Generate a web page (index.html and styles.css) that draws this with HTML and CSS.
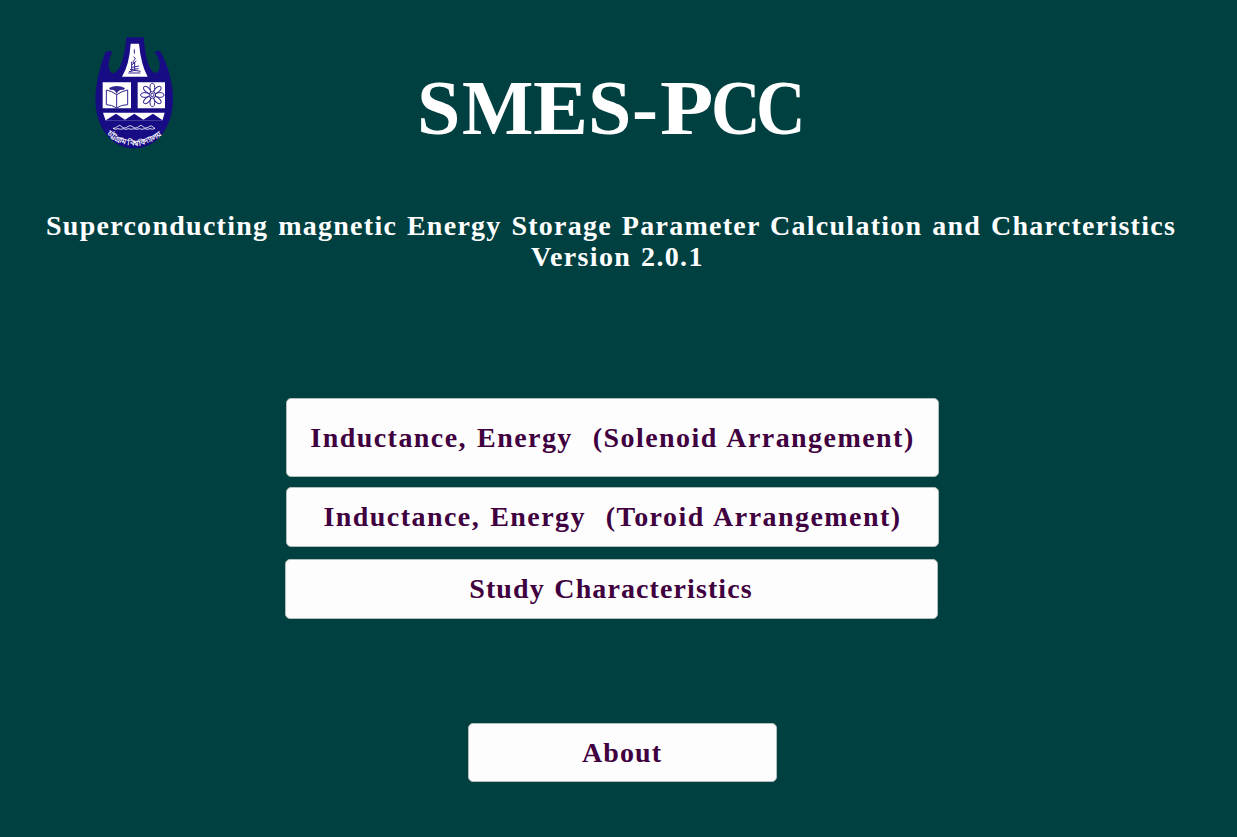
FILE: index.html
```html
<!DOCTYPE html>
<html lang="en">
<head>
<meta charset="utf-8">
<title>SMES-PCC</title>
<link rel="stylesheet" href="styles.css">
</head>
<body>
<header class="header">
  <svg class="logo" viewBox="0 0 300 390" role="img" aria-label="University crest">
    <path class="navy" d="M127 28H179C183 65 187 112 207 133C229 143 237 104 212 73Q223 65 230 72C252 112 268 168 267 215C266 300 217 361 151 361C85 361 35 301 34 215C34 165 50 108 65 71Q78 67 85 72C68 105 72 135 89 136C113 128 123 75 127 28Z"/>
    <path class="paper" d="M140 47H165Q171 110 191 146H114Q136 110 140 47ZM56 163H141V241H56ZM161 163H243V241H161ZM57 254H242L235 278H65Z"/>
    <path class="ink" d="M151 64v13M149 86q9 5 1 12q-8 5 3 9M143 111l14-12m-14 19l22-4m-27 11l26-3m-29 9q17-7 35-1m-37 5h36m-26-34v29m9-26v25M67 186Q83 189 98 200Q114 189 131 186V230Q111 230 98 240Q83 230 67 230ZM98 200V239"/>
    <path class="pages" d="M75 180Q98 168 123 180L119 186Q104 183 98 198Q93 183 79 186Z"/>
    <g class="ink" transform="translate(205 201)">
      <circle r="5"/>
      <ellipse cx="0" cy="-22" rx="7" ry="13"/><ellipse cx="0" cy="-22" rx="7" ry="13" transform="rotate(45)"/><ellipse cx="0" cy="-22" rx="7" ry="13" transform="rotate(90)"/><ellipse cx="0" cy="-22" rx="7" ry="13" transform="rotate(135)"/><ellipse cx="0" cy="-22" rx="7" ry="13" transform="rotate(180)"/><ellipse cx="0" cy="-22" rx="7" ry="13" transform="rotate(225)"/><ellipse cx="0" cy="-22" rx="7" ry="13" transform="rotate(270)"/><ellipse cx="0" cy="-22" rx="7" ry="13" transform="rotate(315)"/>
    </g>
    <path class="navy" d="M63 278L96 257L123 275L151 257L178 275L207 257L238 278Z"/>
    <path class="wave" d="M87 301Q95 301 101 295T112 295T122 300T133 295T144 295T154 300T165 295T176 295T186 300T197 295T208 298L213 301Q206 306 198 302Q190 306 182 302Q174 306 166 302Q158 306 150 302Q142 306 134 302Q126 306 118 302Q110 306 102 302Q94 306 87 301"/>
    <path id="arc" fill="none" d="M68 319Q150 387 236 319"/>
    <text class="motto"><textPath href="#arc" textLength="182" lengthAdjust="spacingAndGlyphs">চট্টগ্রাম বিশ্ববিদ্যালয়</textPath></text>
  </svg>
  <h1 class="title"><span class="s1">S</span><span class="m">M</span><span class="e">E</span><span class="s2">S</span><span class="dash">-</span><span class="p">P</span><span class="c">C</span><span class="c">C</span></h1>
</header>
<section class="subtitle">
  <p class="full-name">Superconducting magnetic Energy Storage Parameter Calculation and Charcteristics</p>
  <p class="version">Version 2.0.1</p>
</section>
<main class="menu">
  <button class="button solenoid">Inductance, Energy&nbsp; (Solenoid Arrangement)</button>
  <button class="button toroid">Inductance, Energy&nbsp; (Toroid Arrangement)</button>
  <button class="button study">Study Characteristics</button>
  <button class="button about">About</button>
</main>
</body>
</html>
```
FILE: styles.css
```css
* { box-sizing: border-box; }
body {
  margin: 0;
  height: 837px;
  overflow: hidden;
  background: #004040;
  color: #fff;
  font-family: "Liberation Serif", serif;
  font-weight: bold;
}
.header { display: flex; height: 172px; padding: 28px 0 0 84px; }
.logo { width: 100px; height: 130px; flex: none; }
.navy { fill: #180c84; }
.paper { fill: #fff; }
.pages { fill: #30248f; }
.ink { fill: none; stroke: #30248f; stroke-width: 3; }
.wave { fill: none; stroke: #fff; stroke-width: 2.5; }
.motto { fill: #fff; font: bold 22px "Noto Sans", sans-serif; }
.title {
  display: flex;
  margin: 35px 0 0 233px;
  font-size: 78px;
  line-height: 90px;
  white-space: nowrap;
}
.title span { display: block; transform-origin: left; }
.s1 { width: 45px; }
.m { width: 71px; transform: scaleX(.97); }
.e { width: 55px; transform: scaleX(1.06); }
.s2 { width: 44px; }
.dash { width: 28px; }
.p { width: 51px; transform: scaleX(1.12); }
.c { width: 45px; transform: scaleX(.88); }
.subtitle {
  height: 226px;
  padding-top: 38px;
  font-size: 28px;
  line-height: 31px;
  letter-spacing: 1.27px;
  word-spacing: 1.5px;
  white-space: nowrap;
}
.subtitle p { margin: 0; }
.full-name { padding-left: 46px; }
.version { padding-left: 531px; letter-spacing: 1.35px; }
.menu { display: flex; flex-direction: column; align-items: flex-start; padding-left: 286px; }
.button {
  width: 653px;
  height: 60px;
  padding: 0;
  border: 1px solid #b5bcbc;
  border-radius: 5px;
  background: #fdfdfd;
  color: #400040;
  font: inherit;
  font-size: 28px;
  line-height: 32px;
  letter-spacing: 1.45px;
  word-spacing: 1.5px;
  white-space: nowrap;
}
.solenoid { height: 79px; margin-bottom: 10px; }
.toroid { margin-bottom: 12px; }
.study { margin-left: -1px; padding-right: 1px; letter-spacing: 1.1px; }
.about { width: 309px; height: 59px; margin: 104px 0 0 182px; padding-right: 1px; letter-spacing: 1.1px; }
```
